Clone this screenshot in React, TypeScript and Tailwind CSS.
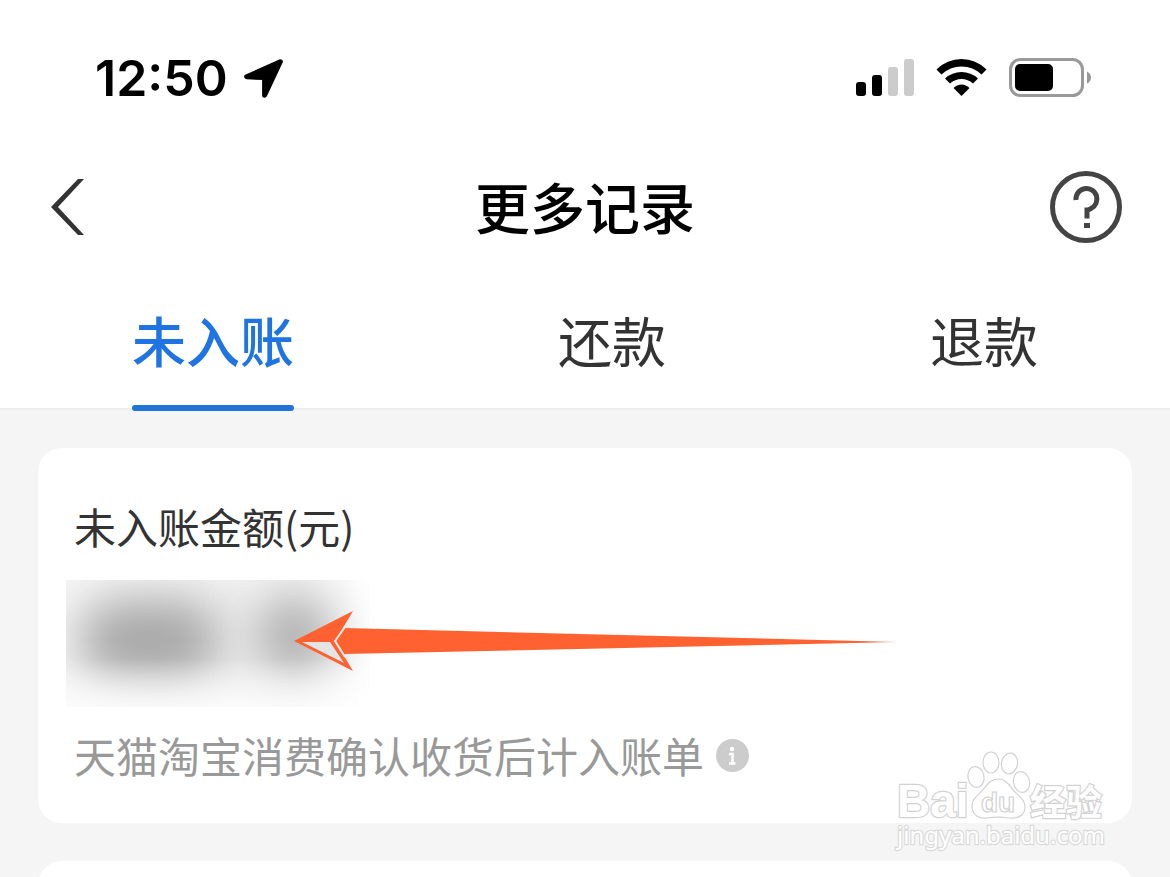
import { useState } from "react";

type Tab = {
  id: string,
  label: string
}

const tabs: Tab[] = [
  { id: "pending", label: "未入账" },
  { id: "repay", label: "还款" },
  { id: "refund", label: "退款" }
]

const StatusBar = () => {
  return (
    <div className="flex h-[144px] items-center justify-between pt-2.5 pr-[79px] pl-[95px]">
      <div className="flex items-center gap-4 pt-0.5">
        <span className="font-[Inter,sans-serif] text-[50px] leading-[60px] font-semibold text-black">12:50</span>
        <svg className="h-[39px] w-[39px]" viewBox="0 0 39 39" aria-hidden="true">
          <path d="M36.3 2.7 L2.7 17.8 L20.6 18.6 L20.6 36.3 Z" fill="#000" stroke="#000" strokeWidth="5" strokeLinejoin="round" />
        </svg>
      </div>
      <div className="flex items-center gap-[22px]">
        <svg className="h-[38px] w-[58px]" viewBox="0 0 58 38" aria-hidden="true">
          <rect x="0" y="24" width="10" height="14" rx="3" fill="#000" />
          <rect x="16" y="17" width="10" height="21" rx="3" fill="#000" />
          <rect x="32" y="9" width="10" height="29" rx="3" fill="#ccc" />
          <rect x="48" y="1" width="10" height="37" rx="3" fill="#ccc" />
        </svg>
        <svg className="h-[38px] w-[51px]" viewBox="0 0 51 38" aria-hidden="true">
          <path d="M0.5 11.5 Q11 1 25.5 1 Q40 1 50.5 11.5 L45.5 16.5 Q37 8.5 25.5 8.5 Q14 8.5 5.5 16.5 Z" />
          <path d="M9 20.5 Q16 14 25.5 14 Q35 14 42 20.5 L37 25.5 Q32 21 25.5 21 Q19 21 14 25.5 Z" />
          <path d="M17.5 30 Q21 26.5 25.5 26.5 Q30 26.5 33.5 30 L25.5 38 Z" />
        </svg>
        <svg className="h-[39px] w-[82px]" viewBox="0 0 82 39" aria-hidden="true">
          <rect x="1.5" y="1.5" width="72" height="36" rx="10" fill="none" stroke="#999" strokeWidth="3" />
          <rect x="6" y="6" width="38" height="27" rx="5" fill="#000" />
          <path d="M78 13.5 Q82 15.5 82 19.5 Q82 23.5 78 25.5 Z" fill="#999" />
        </svg>
      </div>
    </div>
  )
}

const NavBar = () => {
  return (
    <header className="flex h-[126px] items-center justify-between px-12">
      <button type="button" aria-label="返回" className="flex w-[72px] pl-[3px]">
        <svg className="h-14 w-[34px]" viewBox="0 0 34 56">
          <path d="M0 28 L27 0 H33 L7 28 L33 56 H27 Z" fill="#333" />
        </svg>
      </button>
      <h1 className="pb-1 text-[55px] leading-[72px] font-medium text-black">更多记录</h1>
      <button type="button" aria-label="帮助">
        <svg className="h-[72px] w-[72px]" viewBox="0 0 72 72" fill="none" stroke="#444" strokeWidth="5">
          <circle cx="36" cy="36" r="33.5" />
          <path d="M26 29 A10.5 10.5 0 1 1 41 37.5 Q39 39 37 39 V47.5" />
          <rect x="34" y="52" width="6" height="5" fill="#444" stroke="none" />
        </svg>
      </button>
    </header>
  )
}

//arrow pointing at the hidden amount
const Arrow = () => {
  return (
    <svg className="absolute top-[163px] left-[256px] h-[60px] w-[606px]" viewBox="0 0 606 60" aria-hidden="true">
      <defs>
        <linearGradient id="tail" x1="0" x2="1">
          <stop offset="0.94" stopColor="#ff6130" />
          <stop offset="1" stopColor="#b06a50" stopOpacity="0.6" />
        </linearGradient>
      </defs>
      <path d="M50 17 L604 31 L50 43 L42 30 Z" fill="url(#tail)" />
      <path d="M0 30 L59 0 L41 30 L59 60 Z" fill="#ff6130" />
      <path d="M8 31 H36 L50 52 Z" fill="#e4e4e4" />
      <path d="M51 16 L41 30 L51 46" fill="none" stroke="#fbe9e2" strokeWidth="2" />
    </svg>
  )
}

const Watermark = () => {
  return (
    <svg className="absolute top-[340px] right-[60px] h-[104px] w-[216px]" viewBox="0 0 216 104" fill="#fff" stroke="#d2d2d2" strokeWidth="1.2">
      <g fontFamily="Liberation Sans, Noto Sans CJK SC, sans-serif" paintOrder="stroke" strokeWidth="2.4">
        <text x="3" y="67" fontSize="46" fontWeight="700">Bai</text>
        <text x="136" y="66" fontSize="36" fontWeight="700">经验</text>
        <text x="3" y="94" fontSize="24" fontFamily="Noto Sans, sans-serif" stroke="#dadada">jingyan.baidu.com</text>
      </g>
      <ellipse cx="82" cy="27" rx="8" ry="10.5" transform="rotate(-12 82 27)" />
      <ellipse cx="97" cy="12.5" rx="8" ry="10.5" />
      <ellipse cx="115.5" cy="13.5" rx="8" ry="10.5" transform="rotate(10 115.5 13.5)" />
      <ellipse cx="127.5" cy="32" rx="8" ry="10.5" transform="rotate(-12 127.5 32)" />
      <path d="M104 29 C95 29 92 37 87 42 C82 47 78 50 78 56 C78 65 85 69 93 68 C99 67 109 67 115 68 C124 69 131 65 131 57 C131 50 126 47 121 42 C116 37 113 29 104 29 Z" />
      <text x="87" y="62" fontSize="28" fontWeight="700" fontFamily="Liberation Sans, sans-serif">du</text>
    </svg>
  )
}

const App = () => {
  const [active, setActive] = useState("pending")

  return (
    <div className="flex h-screen flex-col overflow-hidden bg-[#f5f5f5] font-['Noto_Sans_CJK_SC',sans-serif]">
      <div className="shrink-0 border-b-2 border-[#eeeeee] bg-white">
        <StatusBar />
        <NavBar />
        <nav className="flex justify-around">
          {tabs.map((tab) => (
            <button
              key={tab.id}
              type="button"
              onClick={() => setActive(tab.id)}
              className={`relative h-[138px] pt-0.5 text-[54px] leading-[72px] ${active === tab.id ? "font-medium text-[#1f74e4]" : "text-[#333]"}`}
            >
              {tab.label}
              {active === tab.id && <span className="absolute inset-x-0 -bottom-[3px] h-1.5 rounded-full bg-[#2074d8]" />}
            </button>
          ))}
        </nav>
      </div>

      <main className="relative shrink-0 px-[38px] pt-[38px]">
        <section className="relative rounded-[24px] bg-white px-9 pt-12 pb-[38px]">
          <h2 className="text-[42px] leading-[60px] text-[#333]">未入账金额(元)</h2>
          <div className="relative -ml-2 mt-6 h-[127px] w-[304px] overflow-hidden bg-linear-to-r from-[#f6f6f6] via-[#f2f2f2] via-75% to-white">
            <div className="absolute top-5 left-3 h-20 w-36 rounded-full bg-[#a6a6a6] blur-[24px]" />
            <div className="absolute top-4 left-[188px] h-20 w-20 rounded-full bg-[#acacac] blur-[24px]" />
            <div className="absolute inset-x-0 bottom-0 h-12 bg-linear-to-t from-white/70 to-transparent" />
          </div>
          <div className="mt-[18px] flex items-center gap-3">
            <p className="text-[42px] leading-[60px] text-[#999]">天猫淘宝消费确认收货后计入账单</p>
            <button type="button" aria-label="说明">
              <svg className="h-[33px] w-[33px]" viewBox="0 0 33 33">
                <circle cx="16.5" cy="16.5" r="16.5" fill="#ccc" />
                <circle cx="16" cy="10" r="2.2" fill="#fff" />
                <path d="M13 15 H16.5 V24 M13 24.5 H19.5" fill="none" stroke="#fff" strokeWidth="2.6" />
              </svg>
            </button>
          </div>
          <Arrow />
        </section>
        <section className="mt-[38px] h-24 rounded-[24px] bg-white" />
        <Watermark />
      </main>
    </div>
  )
}

export default App;
